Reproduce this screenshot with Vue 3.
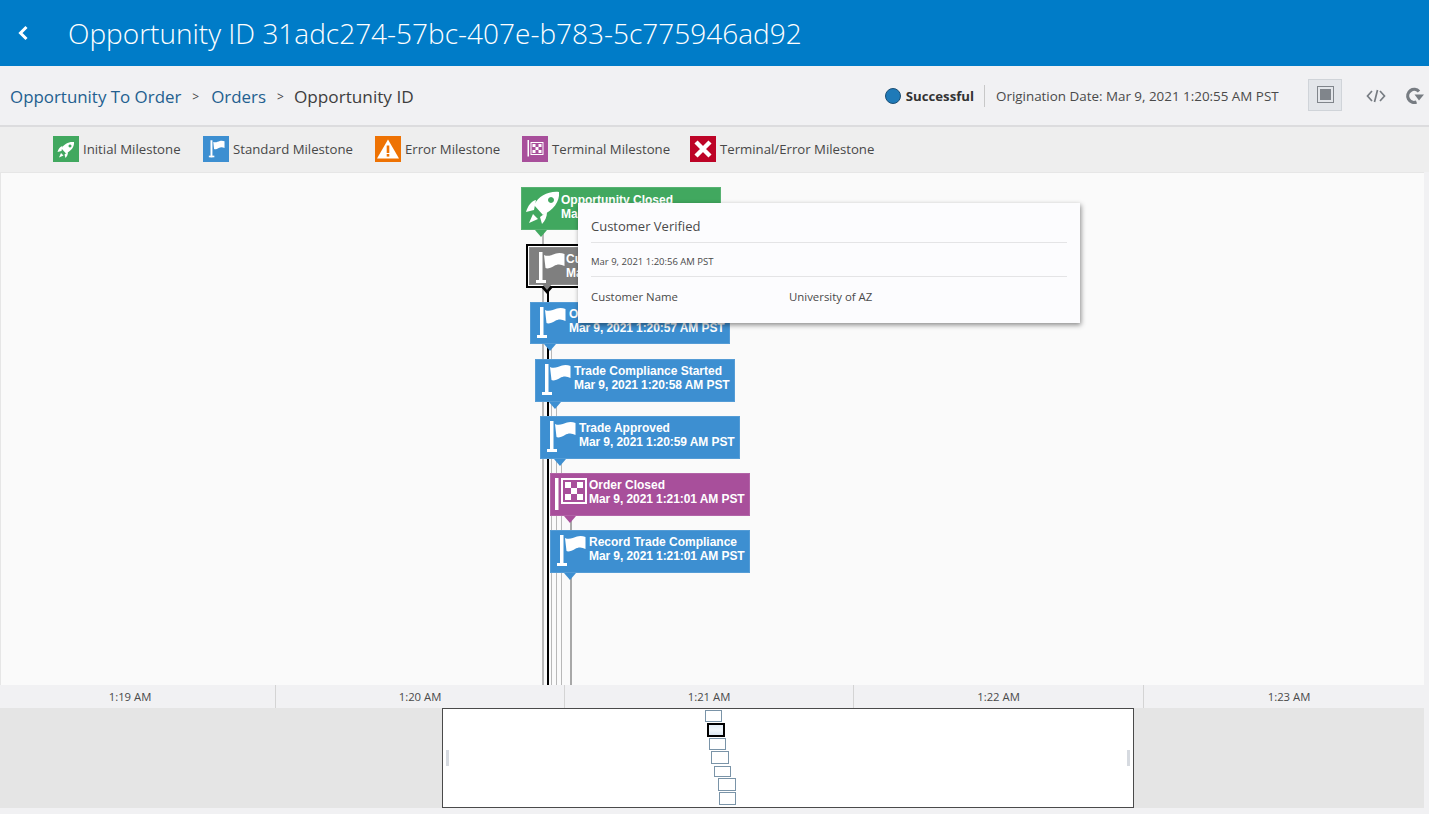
<script setup>
const legend = [
  { kind: 'rocket', color: '#41a85f', label: 'Initial Milestone', w: 150 },
  { kind: 'flag', color: '#3d8fd1', label: 'Standard Milestone', w: 172 },
  { kind: 'warn', color: '#ee7203', label: 'Error Milestone', w: 147 },
  { kind: 'term', color: '#a84f9b', label: 'Terminal Milestone', w: 168 },
  { kind: 'cross', color: '#bd0427', label: 'Terminal/Error Milestone', w: 190 }
]
const nodes = [
  { kind: 'rocket', cls: 'green', x: 520, y: 14, h: 43, title: 'Opportunity Closed', date: 'Mar 9, 2021 1:20:55 AM PST' },
  { kind: 'flag', cls: 'grey', x: 528, y: 74, w: 195, h: 38, title: 'Customer Verified', date: 'Mar 9, 2021 1:20:56 AM PST' },
  { kind: 'flag', cls: 'blue', x: 529, y: 129, h: 42, title: 'Order Started', date: 'Mar 9, 2021 1:20:57 AM PST' },
  { kind: 'flag', cls: 'blue', x: 534, y: 186, h: 43, title: 'Trade Compliance Started', date: 'Mar 9, 2021 1:20:58 AM PST' },
  { kind: 'flag', cls: 'blue', x: 539, y: 243, h: 43, title: 'Trade Approved', date: 'Mar 9, 2021 1:20:59 AM PST' },
  { kind: 'term', cls: 'purple', x: 549, y: 300, h: 43, title: 'Order Closed', date: 'Mar 9, 2021 1:21:01 AM PST' },
  { kind: 'flag', cls: 'blue', x: 549, y: 357, h: 43, title: 'Record Trade Compliance', date: 'Mar 9, 2021 1:21:01 AM PST' }
]
const lines = [
  { x: 541, y: 57, w: 2, c: '#b8b8b8' },
  { x: 545.5, y: 115, w: 2, c: '#000' },
  { x: 549.5, y: 171, w: 1.5, c: '#b8b8b8' },
  { x: 554.5, y: 229, w: 1.5, c: '#b8b8b8' },
  { x: 559.5, y: 286, w: 1.5, c: '#b8b8b8' },
  { x: 568.5, y: 343, w: 2.5, c: '#a8a8a8' }
]
const ticks = ['1:19 AM', '1:20 AM', '1:21 AM', '1:22 AM', '1:23 AM']
const mini = [
  { x: 262, y: 1, w: 17, h: 12 },
  { x: 264, y: 14, w: 18, h: 14, on: true },
  { x: 266, y: 29, w: 17, h: 12 },
  { x: 268, y: 42, w: 18, h: 13 },
  { x: 271, y: 57, w: 17, h: 11 },
  { x: 275, y: 69, w: 18, h: 13 },
  { x: 276, y: 83, w: 17, h: 13 }
]
const px = (v) => v + 'px'
</script>

<template>
  <div class="page">
    <header class="top">
      <svg class="back" viewBox="0 0 12 16" width="12" height="16"><path d="M9.5 2 L3.5 8 L9.5 14" fill="none" stroke="#fff" stroke-width="3"/></svg>
      <h1>Opportunity ID 31adc274-57bc-407e-b783-5c775946ad92</h1>
    </header>

    <nav class="crumbs">
      <div class="trail">
        <a>Opportunity To Order</a><span class="sep first">&gt;</span>
        <a>Orders</a><span class="sep">&gt;</span>
        <span class="cur">Opportunity ID</span>
      </div>
      <div class="status">
        <span class="dot"></span>
        <b>Successful</b>
        <span class="bar"></span>
        <span class="orig">Origination Date: Mar 9, 2021 1:20:55 AM PST</span>
        <button class="toggle"><span class="sq"><span></span></span></button>
        <svg class="code" viewBox="0 0 20 16" width="20" height="16"><path d="M6 3 L1.5 8 L6 13 M14 3 L18.5 8 L14 13 M11.5 2 L8.5 14" fill="none" stroke="#777c82" stroke-width="1.7"/></svg>
        <svg class="redo" viewBox="0 0 20 18" width="20" height="18"><path d="M14 4.5 A6.5 6.5 0 1 0 11.5 15" fill="none" stroke="#777c82" stroke-width="3.2"/><path d="M9.5 7.5 H19 L14 13.5 Z" fill="#777c82"/></svg>
      </div>
    </nav>

    <section class="legend">
      <div v-for="l in legend" :key="l.label" class="key" :style="{ width: px(l.w) }">
        <span class="swatch" :style="{ background: l.color }">
          <svg viewBox="0 0 26 26" width="26" height="26">
            <g v-if="l.kind === 'rocket'" fill="#fff" transform="translate(2 3.5) scale(.5)">
              <path d="M38 5 C27 4 18 9 13 18 L22 28 C32 23 39 15 38 5 Z M30 10 a3 3 0 1 0 .01 0 Z" fill-rule="evenodd"/>
              <path d="M15 13 C10 14 7 19 5 25 L13 23 Z M26 25 C26 30 24 34 21 37 L19 30 Z M12 27 L17 32 L8 36 Z"/>
            </g>
            <g v-else-if="l.kind === 'flag'" fill="#fff" transform="translate(2 1.5) scale(.55)">
              <rect x="10" y="5" width="3.5" height="31"/><rect x="7" y="33" width="10" height="3"/>
              <path d="M15 8 C19 10 23 8 27 6.5 C30 5.5 33 6 35.5 7 L35.5 19 C32 17 28 17 25 19 C22 21 18 22 16.5 21 Z"/>
            </g>
            <g v-else-if="l.kind === 'warn'">
              <path d="M13 3.5 L24 22.5 L2 22.5 Z" fill="#fff"/>
              <rect x="11.7" y="9.5" width="2.6" height="7.5" fill="#ee7203"/><rect x="11.7" y="18" width="2.6" height="2.6" fill="#ee7203"/>
            </g>
            <g v-else-if="l.kind === 'term'" fill="#fff" transform="translate(-.5 0)">
              <rect x="6" y="4" width="1.5" height="16.5"/>
              <path d="M9 6 H22 V19 H9 Z M10 7 V18 H21 V7 Z" fill-rule="evenodd"/>
              <path d="M11 8h3v3h-3z M17 8h3v3h-3z M14 11h3v3h-3z M11 14h3v3h-3z M17 14h3v3h-3z"/>
            </g>
            <path v-else d="M6 6 L20 20 M20 6 L6 20" stroke="#fff" stroke-width="4.4" fill="none"/>
          </svg>
        </span>
        <span class="key-text">{{ l.label }}</span>
      </div>
    </section>

    <main class="chart">
      <div class="canvas">
        <span v-for="(ln, i) in lines" :key="i" class="line"
          :style="{ left: px(ln.x), top: px(ln.y), width: px(ln.w), background: ln.c }"></span>

        <div class="selected"></div>

        <div v-for="n in nodes" :key="n.date + n.title" class="node" :class="n.cls"
          :style="{ left: px(n.x), top: px(n.y), width: px(n.w || 200), height: px(n.h) }">
          <svg class="node-icon" viewBox="0 0 39 43" width="39" height="43">
            <g v-if="n.kind === 'rocket'" fill="#fff">
              <path d="M38 5 C27 4 18 9 13 18 L22 28 C32 23 39 15 38 5 Z M30 10 a3 3 0 1 0 .01 0 Z" fill-rule="evenodd"/>
              <path d="M15 13 C10 14 7 19 5 25 L13 23 Z M26 25 C26 30 24 34 21 37 L19 30 Z M12 27 L17 32 L8 36 Z"/>
            </g>
            <g v-else-if="n.kind === 'flag'" fill="#fff">
              <rect x="10" y="5" width="3.5" height="31"/><rect x="7" y="33" width="10" height="3"/>
              <path d="M15 8 C19 10 23 8 27 6.5 C30 5.5 33 6 35.5 7 L35.5 19 C32 17 28 17 25 19 C22 21 18 22 16.5 21 Z"/>
            </g>
            <g v-else fill="#fff">
              <rect x="5" y="5" width="3.5" height="32"/>
              <path d="M11 5 H37 V31 H11 Z M13 7 V29 H35 V7 Z" fill-rule="evenodd"/>
              <path d="M15 9h6v6h-6z M27 9h6v6h-6z M21 15h6v6h-6z M15 21h6v6h-6z M27 21h6v6h-6z"/>
            </g>
          </svg>
          <div class="node-text"><b>{{ n.title }}</b><b class="when">{{ n.date }}</b></div>
          <i class="tip"></i>
        </div>

        <div class="popup">
          <div class="pop-title">Customer Verified</div>
          <div class="pop-date">Mar 9, 2021 1:20:56 AM PST</div>
          <div class="pop-row"><span>Customer Name</span><span>University of AZ</span></div>
        </div>
      </div>

      <div class="axis">
        <span v-for="t in ticks" :key="t" class="tick">{{ t }}</span>
      </div>

      <div class="overview">
        <div class="window">
          <span class="handle left"></span>
          <span class="handle right"></span>
          <span v-for="(m, i) in mini" :key="i" class="mini" :class="{ on: m.on }"
            :style="{ left: px(m.x), top: px(m.y), width: px(m.w), height: px(m.h) }"></span>
        </div>
      </div>
    </main>
  </div>
</template>

<style>
html, body { margin: 0; background: #f1f1f3; }
</style>

<style scoped>
.page {
  width: 1429px;
  height: 814px;
  overflow: hidden;
  font-family: "Open Sans", "Noto Sans", sans-serif;
  color: #444;
  background: #f1f1f3;
}
.top {
  height: 66px;
  background: #007cc8;
  display: flex;
  align-items: center;
  padding-left: 17px;
  gap: 39px;
}
.top h1 {
  margin: 0;
  font-size: 28px;
  font-weight: 300;
  color: #fff;
  white-space: nowrap;
}
.back { flex: none; }
.crumbs {
  height: 61px;
  box-sizing: border-box;
  background: #f1f1f3;
  border-bottom: 2px solid #dcdcde;
  display: flex;
  align-items: center;
  justify-content: space-between;
  padding: 2px 4px 0 10px;
}
.trail { display: flex; align-items: center; font-size: 16.9px; }
.trail a { color: #23608f; }
.sep { font-size: 12px; margin: 0 11px; color: #444; }
.sep.first { margin-right: 12px; }
.sep + a + .sep { margin-right: 10px; }
.cur { color: #3e3e3e; font-size: 17.2px; }
.status { display: flex; align-items: center; font-size: 13.4px; color: #4a4a4a; margin-bottom: 2px; }
.dot {
  width: 16px; height: 16px; box-sizing: border-box; border-radius: 50%;
  background: #1f7ab8; border: 1px solid #1c4f75;
  margin-right: 5px;
}
.status b { font-size: 13.2px; color: #333; }
.bar { width: 1px; height: 22px; background: #c8c8c8; margin: 0 11px 0 10px; }
.orig { width: 312px; white-space: nowrap; }
.toggle {
  width: 34px; height: 32px; padding: 0; margin: 0 24px 2px 0;
  background: #e3e6ea; border: 1px solid #d0d4d9;
  display: flex; align-items: center; justify-content: center;
}
.sq { width: 17px; height: 17px; box-sizing: border-box; border: 1px solid #80858b; display: flex; align-items: center; justify-content: center; }
.sq span { width: 11px; height: 11px; background: #80858b; }
.code { margin: 0 19px 0 0; }
.legend {
  height: 45px;
  background: #eeeeee;
  display: flex;
  align-items: center;
  padding: 0 0 2px 53px;
  box-sizing: border-box;
}
.key { display: flex; align-items: center; gap: 4px; flex: none; }
.swatch { width: 26px; height: 26px; display: block; flex: none; }
.swatch svg { display: block; }
.key-text { font-size: 13.2px; color: #484848; white-space: nowrap; }
.chart { width: 1424px; }
.canvas {
  position: relative;
  height: 513px;
  background: #fafafa;
  border-top: 1px solid #e6e6e6;
  border-left: 1px solid #e6e6e6;
  box-sizing: border-box;
}
.line { position: absolute; bottom: 0; }
.selected {
  position: absolute;
  left: 525px; top: 71px;
  width: 198px; height: 40px;
  border: 2px solid #000;
  background: #fff;
}
.node {
  position: absolute;
  box-sizing: border-box;
  display: flex;
  color: #fff;
  box-shadow: inset 0 0 0 1px rgba(255,255,255,.12);
}
.green { background: #41a85f; }
.blue { background: #3d8fd1; }
.grey { background: #7f7f7f; }
.purple { background: #a84f9b; }
.node-icon { flex: none; display: block; }
.grey .node-icon { margin-right: -2px; }
.green .node-text { padding: 6px 0 0 1px; }
.node-text {
  font-family: "Liberation Sans", Arial, sans-serif;
  font-size: 12px;
  line-height: 14px;
  padding-top: 5px;
  white-space: nowrap;
  display: flex;
  flex-direction: column;
}
.when { letter-spacing: -.08px; }
.tip {
  position: absolute;
  left: 14px;
  bottom: -7px;
  width: 0; height: 0;
  border-left: 6px solid transparent;
  border-right: 6px solid transparent;
  border-top: 7px solid currentColor;
}
.green .tip { color: #41a85f; }
.blue .tip { color: #3d8fd1; }
.purple .tip { color: #a84f9b; }
.grey .tip {
  color: #000;
  left: 11px;
  bottom: -9px;
  border-left-width: 7px;
  border-right-width: 7px;
  border-top-width: 8px;
}
.grey .tip::after {
  content: "";
  position: absolute;
  left: -5px;
  top: -10px;
  border-left: 5px solid transparent;
  border-right: 5px solid transparent;
  border-top: 6px solid #7f7f7f;
}
.popup {
  position: absolute;
  left: 577px; top: 30px;
  width: 502px; height: 120px;
  box-sizing: border-box;
  padding: 0 13px;
  background: #fcfcfe;
  box-shadow: 1px 2px 5px rgba(0,0,0,.45);
  color: #4a4a4a;
}
.pop-title {
  height: 39px; line-height: 47px;
  font-size: 13px;
  border-bottom: 1px solid #e4e4e6;
}
.pop-date {
  height: 33px; line-height: 37px;
  font-size: 9.5px;
  border-bottom: 1px solid #e4e4e6;
}
.pop-row {
  display: grid;
  grid-template-columns: 198px 1fr;
  line-height: 39px;
  font-size: 11.4px;
}
.axis {
  height: 23px;
  background: #f1f1f3;
  display: grid;
  grid-template-columns: 276px 289px 289px 290px 290px;
  overflow: hidden;
  font-size: 11.3px;
  color: #4a4a4a;
}
.tick {
  text-align: center;
  line-height: 24px;
  border-right: 1px solid #d4d4d4;
  box-sizing: border-box;
}
.tick:first-child { padding-right: 15px; }
.tick:last-child { border-right: 0; }
.overview {
  height: 100px;
  background: #e5e5e5;
  padding-left: 442px;
  box-sizing: border-box;
}
.window {
  position: relative;
  width: 692px;
  height: 100px;
  box-sizing: border-box;
  background: #fff;
  border: 1px solid #4a4a4a;
}
.handle {
  position: absolute;
  top: 41px;
  width: 3px; height: 16px;
  background: #d6dae0;
}
.handle.left { left: 3px; }
.handle.right { right: 3px; }
.mini {
  position: absolute;
  box-sizing: border-box;
  border: 1px solid #7a94a8;
}
.mini.on {
  border: 2px solid #000;
  background: linear-gradient(#e4eef7, #f2f7fb 50%, #dce8f2);
}
</style>
